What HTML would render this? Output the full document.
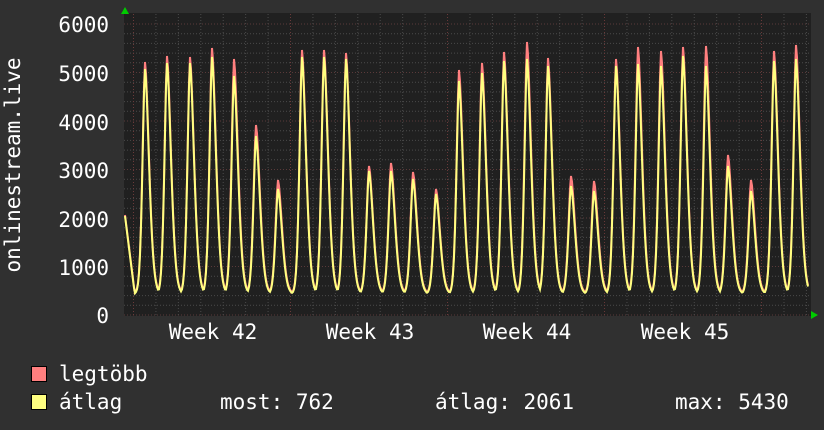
<!DOCTYPE html>
<html><head><meta charset="utf-8"><style>
html,body{margin:0;padding:0;background:#303030;width:824px;height:430px;overflow:hidden}
svg{display:block}
text{font-family:"DejaVu Sans Mono","Liberation Mono",monospace;fill:#fff;font-size:21px}
</style></head><body>
<svg id="g" width="824" height="430" xmlns="http://www.w3.org/2000/svg">
<rect x="0" y="0" width="824" height="430" fill="#303030"/>
<rect x="124" y="13" width="687" height="303" fill="#202020"/>
<g id="grid"></g>
<path id="pmax" fill="none" stroke="#ff7f7f" stroke-width="2"/>
<path id="pavg" fill="none" stroke="#ffff80" stroke-width="2"/>
<polygon points="121,14 129,14 125,7" fill="#00cc00"/>
<polygon points="811,311 811,319 818,315" fill="#00cc00"/>
<g text-anchor="end">
<text x="109" y="32">6000</text>
<text x="109" y="81">5000</text>
<text x="109" y="130">4000</text>
<text x="109" y="178">3000</text>
<text x="109" y="227">2000</text>
<text x="109" y="275">1000</text>
<text x="109" y="323">0</text>
</g>
<text transform="translate(20,165) rotate(-90)" text-anchor="middle">onlinestream.live</text>
<g text-anchor="middle">
<text x="213" y="339">Week 42</text>
<text x="370" y="339">Week 43</text>
<text x="527" y="339">Week 44</text>
<text x="685" y="339">Week 45</text>
</g>
<rect x="31.5" y="366.5" width="15" height="15" fill="#ff7f7f" stroke="#000"/>
<rect x="31.5" y="394.5" width="15" height="15" fill="#ffff80" stroke="#000"/>
<text x="59" y="381">legtöbb</text>
<text x="59" y="409">átlag</text>
<text x="220" y="409">most: 762</text>
<text x="435" y="409">átlag: 2061</text>
<text x="675" y="409">max: 5430</text>
</svg>
<script>
var grid=document.getElementById("grid"),s="";
for(var i=0;i<31;i++){var y=315-i*9.7;if(y<14)break;var major=(i%5==0);
s+='<line x1="124" x2="811" y1="'+y+'" y2="'+y+'" stroke="'+(major?'#5a3a3a':'#4a4a4a')+'" stroke-dasharray="1,2"/>';}
for(var x=133.5;x<811;x+=22.43){var d=Math.round((x-133.5)/22.43);var maj=(d%7==0);
s+='<line y1="14" y2="315" x1="'+x+'" x2="'+x+'" stroke="'+(maj?'#6a3a3a':'#4a4a4a')+'" stroke-dasharray="1,2"/>';}
grid.innerHTML=s;
var pk=[[145,62,68],[167,56,62],[190,57,62],[212,48,56],[234,59,75],[256,125,135],[278,180,188],[302,50,56],[324,50,56],[346,53,58],[369,166,170],[391,163,170],[413,172,178],[436,189,193],[459,70,80],[482,63,72],[504,52,60],[527,42,58],[548,58,65],[571,176,185],[594,181,190],[616,59,65],[638,47,63],[661,51,65],[683,47,55],[706,46,65],[728,155,165],[751,180,190],[774,51,60],[796,45,58]];
function val(x,k){var tr=293;var v=0;
for(var i=0;i<pk.length;i++){var p=pk[i],h=315-p[k],dx=x-p[0];var w=dx<0?3.6:5.8;var b=(315-tr)+(h-(315-tr))*Math.exp(-Math.pow(Math.abs(dx)/w,1.7));if(b>v)v=b;}
if(x<135){v=Math.max(v,100-(x-125)*8);}
return 315-Math.max(v,19);}
function path(k,off){var d="";for(var x=125;x<=808;x++){var y=val(x,k)+off;d+=(x==125?"M":"L")+x+","+y.toFixed(1);}return d;}
document.getElementById("pmax").setAttribute("d",path(1,0));
document.getElementById("pavg").setAttribute("d",path(2,1));
</script>
</body></html>
